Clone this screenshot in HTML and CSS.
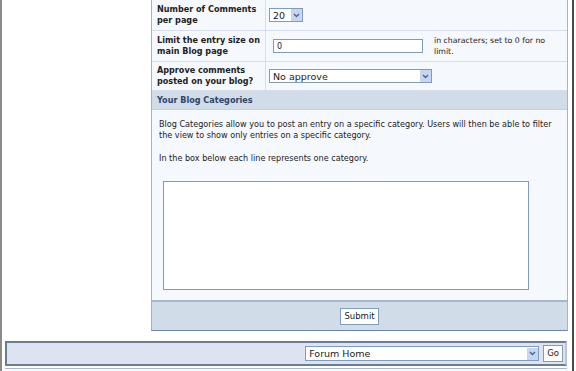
FILE: index.html
```html
<!DOCTYPE html>
<html>
<head>
<meta name="viewport" content="width=device-width, initial-scale=1">
<link rel="stylesheet" href="styles.css">
</head>
<body>
<div class="frame">
  <div class="layout">
    <div class="side"></div>
    <div class="panel">
      <div class="row">
        <div class="label">Number of Comments per page</div>
        <div class="value">
          <span class="select small">20<span class="arrow"><svg width="7" height="5" viewBox="0 0 7 5"><path d="M1 1 L3.5 3.5 L6 1" fill="none" stroke="#4d6185" stroke-width="1.4"/></svg></span></span>
        </div>
      </div>
      <div class="row">
        <div class="label">Limit the entry size on main Blog page</div>
        <div class="value split">
          <span class="textbox">0</span>
          <span class="hint">in characters; set to 0 for no limit.</span>
        </div>
      </div>
      <div class="row">
        <div class="label">Approve comments posted on your blog?</div>
        <div class="value">
          <span class="select wide">No approve<span class="arrow"><svg width="7" height="5" viewBox="0 0 7 5"><path d="M1 1 L3.5 3.5 L6 1" fill="none" stroke="#4d6185" stroke-width="1.4"/></svg></span></span>
        </div>
      </div>
      <div class="heading">Your Blog Categories</div>
      <div class="body">
        <p>Blog Categories allow you to post an entry on a specific category. Users will then be able to filter the view to show only entries on a specific category.</p>
        <p>In the box below each line represents one category.</p>
        <div class="area"></div>
      </div>
      <div class="foot">
        <span class="button">Submit</span>
      </div>
    </div>
  </div>
  <div class="jump">
    <span class="select jumpsel">Forum Home<span class="arrow"><svg width="7" height="5" viewBox="0 0 7 5"><path d="M1 1 L3.5 3.5 L6 1" fill="none" stroke="#4d6185" stroke-width="1.4"/></svg></span></span>
    <span class="button go">Go</span>
  </div>
  <div class="next"></div>
</div>
</body>
</html>
```

FILE: styles.css
```css
body {
  margin: 0;
  background: #ffffff;
  font-family: "DejaVu Sans", Verdana, sans-serif;
  font-size: 8.1px;
  color: #222;
}
.frame {
  width: 570px;
  height: 371px;
  border-left: 2px solid #8a8a8a;
  border-right: 2px solid #4a4a4a;
  overflow: hidden;
}
.layout {
  display: flex;
}
.side {
  width: 149px;
}
.panel {
  width: 415px;
  background: #f5f8fc;
  border-left: 1px solid #a3b3cc;
  border-right: 1px solid #a3b3cc;
  border-bottom: 1px solid #6f84a6;
}
.row {
  display: flex;
  border-bottom: 1px solid #d5deea;
}
.row:nth-child(1) { height: 30px; }
.row:nth-child(2) { height: 30px; }
.row:nth-child(3) { height: 28px; }
.label {
  width: 108px;
  padding: 0 0 0 5px;
  font-weight: bold;
  font-size: 8.1px;
  line-height: 11px;
  border-right: 1px solid #d5deea;
  display: flex;
  align-items: center;
}
.value {
  flex: 1;
  display: flex;
  align-items: center;
  padding-left: 3px;
}
.select {
  display: inline-flex;
  align-items: center;
  justify-content: space-between;
  height: 14px;
  background: #fff;
  border: 1px solid #7f9db9;
  font-size: 9.5px;
  padding-left: 3px;
  box-sizing: border-box;
}
.select.small { width: 34px; }
.select.wide { width: 163px; }
.arrow {
  width: 11px;
  height: 12px;
  background: #c6d5f0;
  display: flex;
  align-items: center;
  justify-content: center;
}
.split {
  padding-left: 7px;
}
.textbox {
  width: 150px;
  height: 14px;
  box-sizing: border-box;
  border: 1px solid #7f9db9;
  background: #fff;
  padding: 2px 3px;
  font-size: 8px;
}
.hint {
  margin-left: 11px;
  width: 124px;
  line-height: 11px;
  font-size: 7.8px;
}
.heading {
  height: 18px;
  line-height: 18px;
  background: #d1dce9;
  padding-left: 5px;
  font-weight: bold;
  font-size: 8.1px;
  color: #2e4468;
  border-bottom: 1px solid #c3cfdf;
}
.body {
  padding: 9px 11px 10px 7px;
  line-height: 11px;
}
.body p {
  margin: 0 0 12px 0;
}
.area {
  margin: 17px 0 0 4px;
  width: 366px;
  height: 109px;
  box-sizing: border-box;
  background: #fff;
  border: 1px solid #7f9db9;
}
.foot {
  height: 28px;
  background: #d1dce9;
  border-top: 2px solid #a6b7d2;
  display: flex;
  align-items: center;
  justify-content: center;
}
.button {
  display: inline-block;
  background: #fff;
  border: 1px solid #7f9db9;
  font-size: 8.5px;
  padding: 3px 3px;
  line-height: 9px;
}
.jump {
  margin: 10px 5px 0 3px;
  height: 21px;
  background: #dde4ef;
  border: 2px solid #6a7b9b;
  border-right-color: #b9c6da;
  display: flex;
  align-items: center;
  justify-content: flex-end;
  padding-right: 2px;
}
.select.jumpsel {
  width: 234px;
  height: 15px;
  font-size: 9.5px;
}
.go {
  margin-left: 4px;
  padding: 3px 3px;
}
.next {
  margin: 2px 5px 0 3px;
  border-top: 1px solid #a6b7d2;
}
```
